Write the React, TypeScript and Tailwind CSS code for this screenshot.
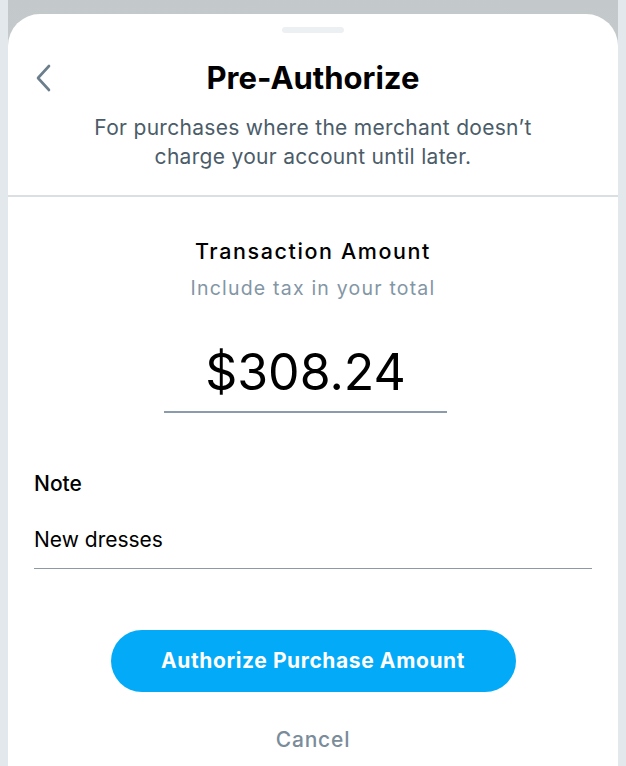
export default function App() {
  return (
    <div className="h-[766px] overflow-hidden bg-[#e3e8ec] px-2 font-['Inter',sans-serif]">
      <div className="h-full bg-gradient-to-b from-[#c3c8cb] to-[#dadee1] pt-[14px]">
        <div className="flex h-full flex-col rounded-t-[32px] bg-white pt-[13px]">
          <div className="mx-auto h-[6px] w-[62px] rounded-full bg-[#edf0f2]" />

          <div className="mt-[26px] grid grid-cols-[60px_1fr_60px] items-center">
            <div className="pl-[27px]">
              <svg width="17" height="28" viewBox="0 0 17 28" fill="none">
                <path d="M14 2 L3 14 L14 26" stroke="#6b7e8d" strokeWidth="2.6" strokeLinecap="round" strokeLinejoin="round" />
              </svg>
            </div>
            <h1 className="text-center text-[31px] leading-[38px] font-bold text-black">Pre-Authorize</h1>
            <div />
          </div>

          <p className="mt-[16px] text-center text-[21px] leading-[29px] tracking-[0.3px] text-[#4b5c69]">
            For purchases where the merchant doesn’t
            <br />
            charge your account until later.
          </p>

          <div className="mt-[24px] h-[2px] bg-[#d9dfe3]" />

          <div className="flex flex-col items-center">
            <div className="mt-[40px] text-[21.5px] leading-[28px] font-medium tracking-[1.6px] text-black">
              Transaction Amount
            </div>
            <div className="mt-[10px] text-[19.5px] leading-[26px] tracking-[1.2px] text-[#8396a5]">
              Include tax in your total
            </div>
          </div>

          <div className="ml-[156px] mt-[41px] w-[283px]">
            <div className="text-center text-[50px] leading-[60px] font-normal text-black">$308.24</div>
            <div className="mt-[9px] h-[2px] bg-[#8b9bab]" />
          </div>

          <div className="px-[26px]">
            <div className="mt-[58px] text-[21px] leading-[26px] font-medium text-black">Note</div>
            <div className="mt-[30px] text-[21px] leading-[26px] text-black">New dresses</div>
            <div className="mt-[15px] h-px bg-[#8d9aa6]" />
          </div>

          <button className="mx-auto mt-[61px] h-[62px] w-[405px] rounded-full bg-[#02aaf8] text-[21px] font-bold tracking-[0.6px] text-white">
            Authorize Purchase Amount
          </button>

          <div className="mt-[35px] text-center text-[21px] leading-[26px] font-medium tracking-[0.8px] text-[#7a8c9a]">
            Cancel
          </div>
        </div>
      </div>
    </div>
  );
}
